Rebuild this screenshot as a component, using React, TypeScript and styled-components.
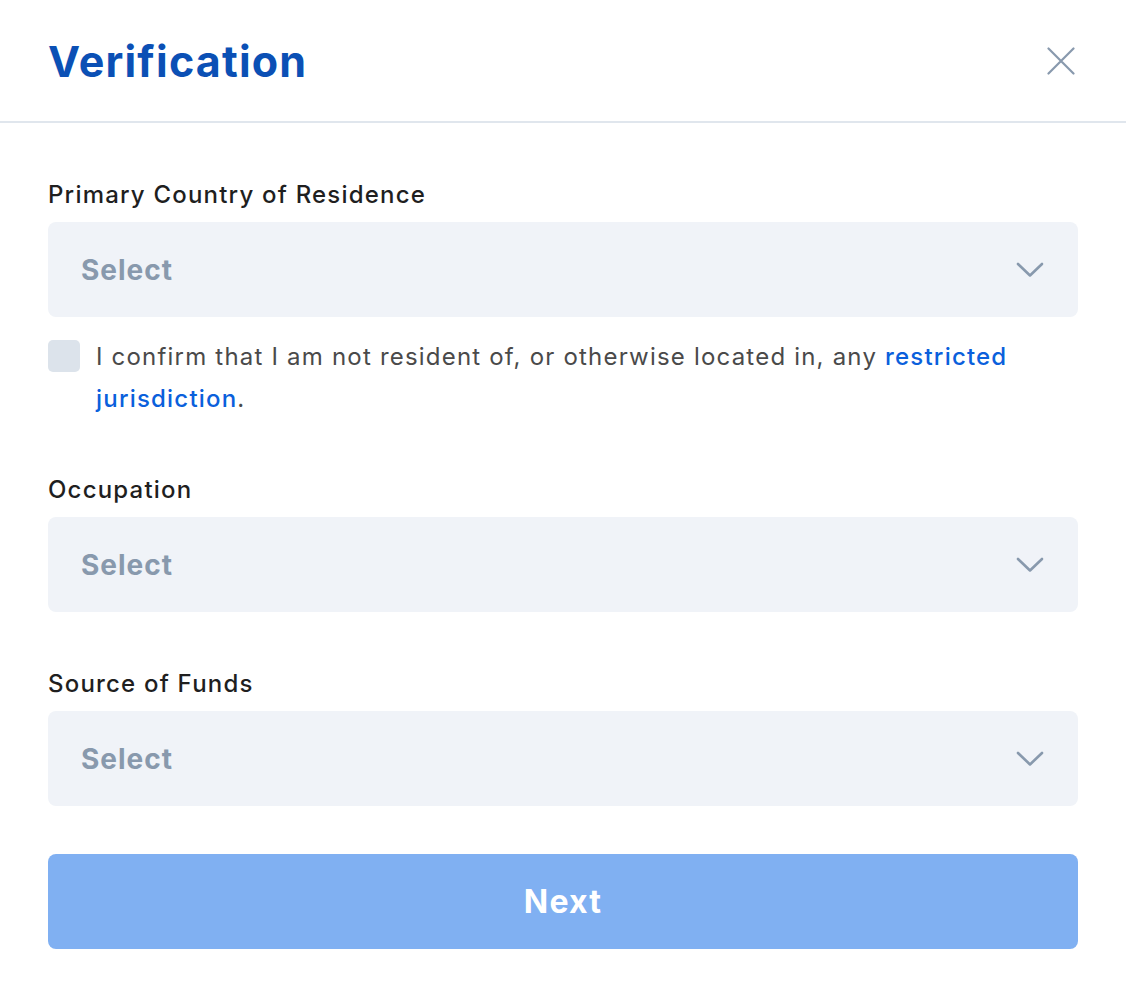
import React from "react";
import styled, { createGlobalStyle } from "styled-components";

const Global = createGlobalStyle`
  html, body { margin: 0; padding: 0; background: #ffffff; }
  body { font-family: "Inter", "Noto Sans", sans-serif; }
  * { box-sizing: border-box; }
`;

const Modal = styled.div`
  width: 1126px;
  min-height: 1002px;
  background: #fff;
`;

const Header = styled.header`
  height: 123px;
  padding: 0 48px;
  display: flex;
  align-items: center;
  justify-content: space-between;
  border-bottom: 2px solid #e0e6ed;
`;

const Title = styled.h1`
  margin: 0;
  font-size: 43px;
  font-weight: 700;
  color: #0b50b5;
  letter-spacing: 1.2px;
`;

const CloseButton = styled.button`
  border: 0;
  background: none;
  padding: 0;
  width: 28px;
  height: 28px;
  display: flex;
  align-items: center;
  justify-content: center;
  cursor: pointer;
  margin-right: 3px;
`;

const Body = styled.div`
  padding: 56px 48px 0;
  display: flex;
  flex-direction: column;
`;

const Field = styled.div<{ $top?: number }>`
  display: flex;
  flex-direction: column;
  margin-top: ${(p) => p.$top ?? 0}px;
`;

const Label = styled.label`
  font-size: 24px;
  line-height: 32px;
  font-weight: 500;
  color: #1f1f1f;
  letter-spacing: 1.2px;
  margin-bottom: 11px;
`;

const SelectBox = styled.div`
  height: 95px;
  border-radius: 8px;
  background: #f0f3f8;
  display: flex;
  align-items: center;
  justify-content: space-between;
  padding: 0 34px 0 33px;
`;

const Placeholder = styled.span`
  font-size: 28px;
  font-weight: 700;
  letter-spacing: 1px;
  color: #8899ad;
`;

const ConfirmRow = styled.div`
  display: flex;
  align-items: flex-start;
  gap: 16px;
  margin-top: 19px;
`;

const Checkbox = styled.span`
  flex: none;
  width: 32px;
  height: 32px;
  margin-top: 4px;
  border-radius: 5px;
  background: #dce3eb;
`;

const ConfirmText = styled.p`
  margin: 0;
  font-size: 24px;
  line-height: 42px;
  letter-spacing: 1.2px;
  color: #4a4a4a;
  font-weight: 400;
`;

const Link = styled.a`
  color: #0a60dc;
  font-weight: 500;
  text-decoration: none;
`;

const NextButton = styled.button`
  margin-top: 48px;
  height: 95px;
  border: 0;
  border-radius: 8px;
  background: #80b0f2;
  color: #ffffff;
  font-family: inherit;
  font-size: 32px;
  font-weight: 700;
  letter-spacing: 1.2px;
  cursor: pointer;
`;

const Chevron = () => (
  <svg width="28" height="16" viewBox="0 0 28 16" fill="none">
    <path d="M2 2 L14 13.5 L26 2" stroke="#8899ad" strokeWidth="2.6" strokeLinecap="round" strokeLinejoin="round" />
  </svg>
);

const CloseIcon = () => (
  <svg width="28" height="28" viewBox="0 0 28 28" fill="none">
    <path d="M1.5 1.5 L26.5 26.5 M26.5 1.5 L1.5 26.5" stroke="#8899ad" strokeWidth="2.2" strokeLinecap="round" />
  </svg>
);

const SelectField = ({ label, top }: { label: string; top?: number }) => (
  <Field $top={top}>
    <Label>{label}</Label>
    <SelectBox>
      <Placeholder>Select</Placeholder>
      <Chevron />
    </SelectBox>
  </Field>
);

export default function App() {
  return (
    <>
      <Global />
      <Modal>
        <Header>
          <Title>Verification</Title>
          <CloseButton aria-label="Close">
            <CloseIcon />
          </CloseButton>
        </Header>
        <Body>
          <SelectField label="Primary Country of Residence" />
          <ConfirmRow>
            <Checkbox />
            <ConfirmText>
              I confirm that I am not resident of, or otherwise located in, any{" "}
              <Link href="#">restricted jurisdiction</Link>.
            </ConfirmText>
          </ConfirmRow>
          <SelectField label="Occupation" top={54} />
          <SelectField label="Source of Funds" top={56} />
          <NextButton>Next</NextButton>
        </Body>
      </Modal>
    </>
  );
}
